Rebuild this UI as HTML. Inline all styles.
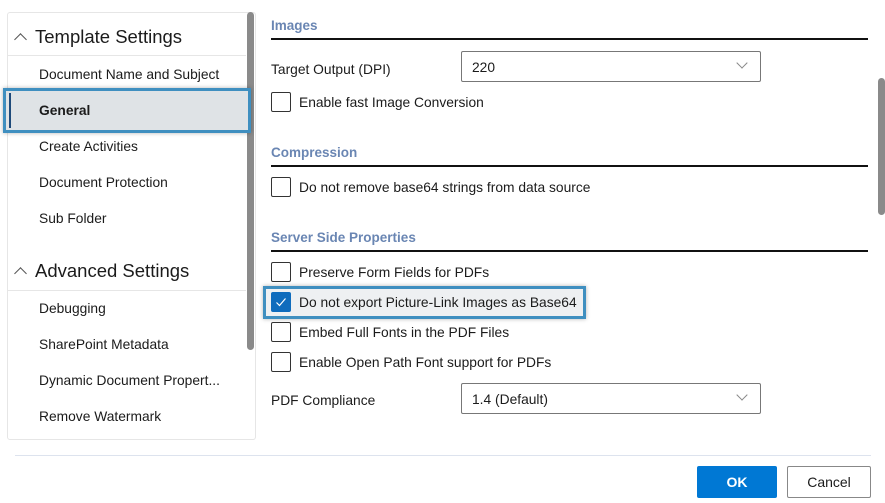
<!DOCTYPE html>
<html><head><meta charset="utf-8"><style>
*{box-sizing:border-box;margin:0;padding:0}
body{width:885px;height:503px;background:#fff;font-family:"Liberation Sans",sans-serif;color:#1b1b1b;position:relative;overflow:hidden;font-size:13.5px}
.a{position:absolute;white-space:nowrap}
.item{position:absolute;left:39px;font-size:13.8px;line-height:18px;margin-top:1px}
.hdr{position:absolute;left:35px;font-size:18.5px;line-height:22px;margin-top:1px}
.chev{position:absolute;left:16px;width:9px;height:9px;border-left:1.3px solid #555;border-top:1.3px solid #555;transform:rotate(45deg)}
.sec{position:absolute;left:271px;font-weight:bold;color:#6a86b3;font-size:13.5px;line-height:18px;margin-top:1px}
.line{position:absolute;left:271px;width:597px;height:1.5px;background:#111}
.cb{position:absolute;left:271px;width:20px;height:20px;border:1.3px solid #333;border-radius:2px}
.lab{position:absolute;left:299px;font-size:13.8px;line-height:18px;margin-top:1px}
.sel{position:absolute;left:461px;width:300px;height:31px;border:1px solid #777;border-radius:2px;padding:8px 0 0 10px;font-size:13.8px}
.sel i{position:absolute;right:14px;top:7px;width:8px;height:8px;border-right:1.2px solid #888;border-bottom:1.2px solid #888;transform:rotate(45deg)}
</style></head><body>
<div class="a" style="left:7px;top:12px;width:249px;height:428px;border:1px solid #e6e6e6;border-radius:3px"></div>
<div class="a" style="left:247px;top:12px;width:7px;height:338px;background:#8a8a8a;border-radius:4px"></div>
<div class="chev" style="top:35px"></div>
<div class="hdr" style="top:25px">Template Settings</div>
<div class="a" style="left:8px;top:55px;width:238px;height:1px;background:#e6e6e6"></div>
<div class="item" style="top:65px">Document Name and Subject</div>
<div class="a" style="left:3px;top:88px;width:248px;height:45px;border:3px solid #3f8fc0;background:#dfe3e6;box-shadow:0 0 4px rgba(0,0,0,.3)"></div>
<div class="a" style="left:9px;top:93px;width:2px;height:35px;background:#1e4a7a"></div>
<div class="item" style="top:101px;font-weight:bold">General</div>
<div class="item" style="top:137px">Create Activities</div>
<div class="item" style="top:173px">Document Protection</div>
<div class="item" style="top:209px">Sub Folder</div>
<div class="chev" style="top:269px"></div>
<div class="hdr" style="top:259px">Advanced Settings</div>
<div class="a" style="left:8px;top:290px;width:238px;height:1px;background:#e6e6e6"></div>
<div class="item" style="top:299px">Debugging</div>
<div class="item" style="top:335px">SharePoint Metadata</div>
<div class="item" style="top:371px">Dynamic Document Propert...</div>
<div class="item" style="top:407px">Remove Watermark</div>

<div class="sec" style="top:16px">Images</div>
<div class="line" style="top:38px"></div>
<div class="lab" style="left:271px;top:60px">Target Output (DPI)</div>
<div class="sel" style="top:51px">220<i></i></div>
<div class="cb" style="top:92px"></div><div class="lab" style="top:93px">Enable fast Image Conversion</div>
<div class="sec" style="top:143px">Compression</div>
<div class="line" style="top:165px"></div>
<div class="cb" style="top:177px"></div><div class="lab" style="top:178px">Do not remove base64 strings from data source</div>
<div class="sec" style="top:228px">Server Side Properties</div>
<div class="line" style="top:250px"></div>
<div class="cb" style="top:262px"></div><div class="lab" style="top:263px">Preserve Form Fields for PDFs</div>
<div class="a" style="left:263px;top:286px;width:323px;height:33px;border:3px solid #3f8fc0;background:#eef0f2;box-shadow:0 0 4px rgba(0,0,0,.3)"></div>
<div class="a" style="left:271px;top:292px;width:20px;height:20px;background:#0f6cbd;border-radius:2px"><svg width="20" height="20"><path d="M5.5 10.5l3 3 6-7" fill="none" stroke="#fff" stroke-width="1.2"/></svg></div>
<div class="lab" style="top:293px">Do not export Picture-Link Images as Base64</div>
<div class="cb" style="top:322px"></div><div class="lab" style="top:323px">Embed Full Fonts in the PDF Files</div>
<div class="cb" style="top:352px"></div><div class="lab" style="top:353px">Enable Open Path Font support for PDFs</div>
<div class="lab" style="left:271px;top:391px">PDF Compliance</div>
<div class="sel" style="top:383px">1.4 (Default)<i></i></div>
<div class="a" style="left:878px;top:78px;width:7px;height:137px;background:#8a8a8a;border-radius:4px"></div>

<div class="a" style="left:15px;top:455px;width:856px;height:1px;background:#dde3ee"></div>
<div class="a" style="left:697px;top:466px;width:80px;height:32px;background:#0078d4;border-radius:2px;color:#fff;font-weight:bold;text-align:center;line-height:33px;font-size:14px">OK</div>
<div class="a" style="left:787px;top:466px;width:84px;height:32px;border:1px solid #888;border-radius:2px;text-align:center;line-height:31px;font-size:14px">Cancel</div>
</body></html>
